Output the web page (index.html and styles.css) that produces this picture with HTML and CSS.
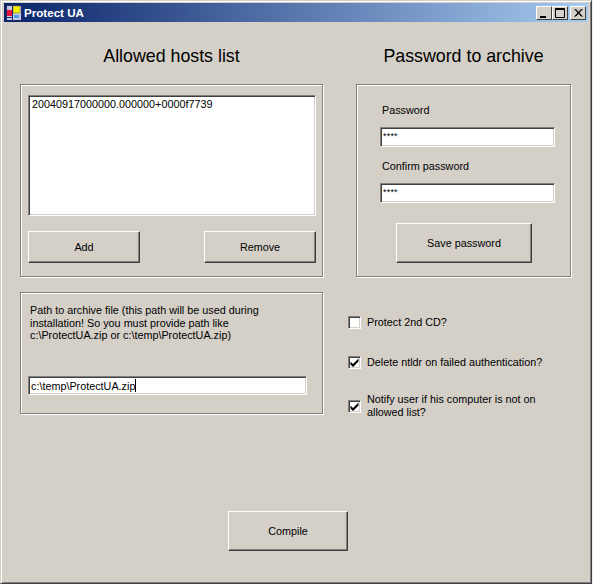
FILE: index.html
```html
<!DOCTYPE html>
<html lang="en">
<head>
    <meta charset="UTF-8">
    <meta name="viewport" content="width=device-width, initial-scale=1.0">
    <title>Protect UA</title>
    <link rel="stylesheet" href="styles.css">
</head>
<body>
    <div class="window">
        <div class="titlebar">
            <svg class="app-icon" width="16" height="16" viewBox="0 0 16 16">
                <rect x="0.5" y="0.5" width="15" height="15" fill="#c8c8e0" stroke="#1a2a6a"/>
                <rect x="1" y="5" width="5" height="6" fill="#e8103c"/>
                <rect x="7" y="1" width="7" height="7" fill="#f4f000" stroke="#6a6a30" stroke-width="0.5"/>
                <rect x="8" y="10" width="5" height="3" fill="#4aa0e8"/>
                <path d="M1 12.5h5M6.5 1v14" stroke="#1a2a6a" fill="none"/>
            </svg>
            <span class="title-text">Protect UA</span>
            <div class="title-buttons">
                <div class="title-btn">
                    <svg width="14" height="12" viewBox="0 0 14 12"><rect x="3" y="9" width="6" height="2" fill="#000"/></svg>
                </div>
                <div class="title-btn">
                    <svg width="14" height="12" viewBox="0 0 14 12"><path d="M2.5 2.5h9v8h-9zM2 1.5h10" fill="none" stroke="#000"/></svg>
                </div>
                <div class="title-btn close">
                    <svg width="14" height="12" viewBox="0 0 14 12"><path d="M3.5 2l7 7.5M4.5 2l7 7.5M10.5 2l-7 7.5M11.5 2l-7 7.5" fill="none" stroke="#000"/></svg>
                </div>
            </div>
        </div>

        <div class="client">
            <div class="columns">
                <div class="col-left">
                    <h2>Allowed hosts list</h2>
                    <div class="group hosts-group">
                        <div class="sunken listbox">20040917000000.000000+0000f7739</div>
                        <div class="hosts-buttons">
                            <div class="btn btn-host">Add</div>
                            <div class="btn btn-host">Remove</div>
                        </div>
                    </div>
                    <div class="group path-group">
                        <p class="path-note">Path to archive file (this path will be used during<br>installation! So you must provide path like<br>c:\ProtectUA.zip or c:\temp\ProtectUA.zip)</p>
                        <div class="sunken textbox path-box">c:\temp\ProtectUA.zip<span class="caret"></span></div>
                    </div>
                </div>

                <div class="col-right">
                    <h2>Password to archive</h2>
                    <div class="group password-group">
                        <label class="field-label">Password</label>
                        <div class="sunken textbox pass-box">****</div>
                        <label class="field-label second">Confirm password</label>
                        <div class="sunken textbox pass-box">****</div>
                        <div class="btn btn-save">Save password</div>
                    </div>
                    <div class="options">
                        <div class="option">
                            <span class="checkbox"></span>
                            <span>Protect 2nd CD?</span>
                        </div>
                        <div class="option">
                            <span class="checkbox"><svg width="9" height="9" viewBox="0 0 9 9"><path d="M0.5 3.5l2.5 2.5L8.5 0.5v3L3 9 0.5 6.5z" fill="#000"/></svg></span>
                            <span>Delete ntldr on failed authentication?</span>
                        </div>
                        <div class="option last">
                            <span class="checkbox"><svg width="9" height="9" viewBox="0 0 9 9"><path d="M0.5 3.5l2.5 2.5L8.5 0.5v3L3 9 0.5 6.5z" fill="#000"/></svg></span>
                            <span>Notify user if his computer is not on<br>allowed list?</span>
                        </div>
                    </div>
                </div>
            </div>
            <div class="compile-row">
                <div class="btn btn-compile">Compile</div>
            </div>
        </div>
    </div>
</body>
</html>
```

FILE: styles.css
```css
html, body {
    margin: 0;
    padding: 0;
}

body {
    font-family: 'Liberation Sans', Arial, sans-serif;
    font-size: 10.8px;
    color: #000;
    background: #f0f0f0;
}

.window {
    box-sizing: border-box;
    width: 592px;
    height: 584px;
    padding: 2px 3px 3px 3px;
    background: #d4d0c8;
    border-top: 1px solid #d4d0c8;
    border-left: 1px solid #d4d0c8;
    border-right: 1px solid #404040;
    border-bottom: 1px solid #404040;
    box-shadow: inset 1px 1px 0 #fff, inset -1px -1px 0 #808080;
    display: flex;
    flex-direction: column;
}

.titlebar {
    height: 19px;
    flex: none;
    display: flex;
    align-items: center;
    padding: 0 2px;
    background: linear-gradient(to right, #0a246a, #a6caf0);
}

.app-icon {
    flex: none;
}

.title-text {
    margin-left: 2px;
    color: #fff;
    font-weight: bold;
    font-size: 11.6px;
}

.title-buttons {
    margin-left: auto;
    display: flex;
}

.title-btn {
    box-sizing: border-box;
    width: 16px;
    height: 14px;
    background: #d4d0c8;
    border: 1px solid;
    border-color: #fff #404040 #404040 #fff;
    display: flex;
}

.title-btn.close {
    margin-left: 2px;
}

.client {
    flex: 1;
    padding-left: 16px;
}

.columns {
    display: grid;
    grid-template-columns: 303px 215px;
    column-gap: 33px;
}

h2 {
    height: 62px;
    margin: 0;
    padding-top: 24px;
    box-sizing: border-box;
    font-size: 17.8px;
    font-weight: normal;
    line-height: 20px;
    text-align: center;
}

.group {
    box-sizing: border-box;
    border: 1px solid #808080;
    box-shadow: 1px 1px 0 #fff, inset 1px 1px 0 #fff;
}

.sunken {
    box-sizing: border-box;
    background: #fff;
    border: 1px solid;
    border-color: #808080 #fff #fff #808080;
    box-shadow: inset 1px 1px 0 #404040, inset -1px -1px 0 #d4d0c8;
}

.btn {
    box-sizing: border-box;
    border: 1px solid;
    border-color: #fff #404040 #404040 #fff;
    box-shadow: inset -1px -1px 0 #808080;
    display: flex;
    align-items: center;
    justify-content: center;
}

.hosts-group {
    height: 193px;
    padding: 10px 6px 0 7px;
}

.listbox {
    height: 121px;
    padding: 2px 3px;
}

.hosts-buttons {
    display: flex;
    justify-content: space-between;
    margin-top: 15px;
}

.btn-host {
    width: 112px;
    height: 32px;
    padding-bottom: 1px;
}

.path-group {
    height: 122px;
    margin-top: 15px;
    padding: 11px 15px 0 9px;
}

.path-note {
    margin: 0;
    line-height: 12.5px;
}

.textbox {
    height: 20px;
    padding: 2px 3px;
    line-height: 14px;
}

.path-box {
    height: 19px;
    margin: 34px 0 0 -2px;
    padding: 2px 2px;
    line-height: 13px;
}

.caret {
    display: inline-block;
    width: 1px;
    height: 13px;
    background: #000;
    vertical-align: -2px;
}

.password-group {
    height: 193px;
    padding: 18px 15px 0 23px;
}

.field-label {
    display: block;
    margin-left: 2px;
    line-height: 14px;
}

.field-label.second {
    margin-top: 12px;
}

.pass-box {
    margin-top: 10px;
    padding: 3px 2px;
    line-height: 10px;
    font-size: 9px;
    letter-spacing: 0.2px;
}

.btn-save {
    width: 136px;
    height: 40px;
    margin: 20px 0 0 16px;
}

.options {
    margin-top: 31px;
    margin-left: -8px;
}

.option {
    display: flex;
    align-items: center;
    gap: 6px;
    height: 28px;
    margin-bottom: 12px;
    line-height: 13px;
}

.option.last {
    margin-top: 16px;
}

.checkbox {
    box-sizing: border-box;
    flex: none;
    width: 13px;
    height: 13px;
    background: #fff;
    border: 1px solid;
    border-color: #808080 #fff #fff #808080;
    box-shadow: inset 1px 1px 0 #404040, inset -1px -1px 0 #d4d0c8;
    display: flex;
    align-items: center;
    justify-content: center;
}

.compile-row {
    margin-top: 79px;
    padding-left: 208px;
}

.btn-compile {
    width: 120px;
    height: 40px;
}
```
